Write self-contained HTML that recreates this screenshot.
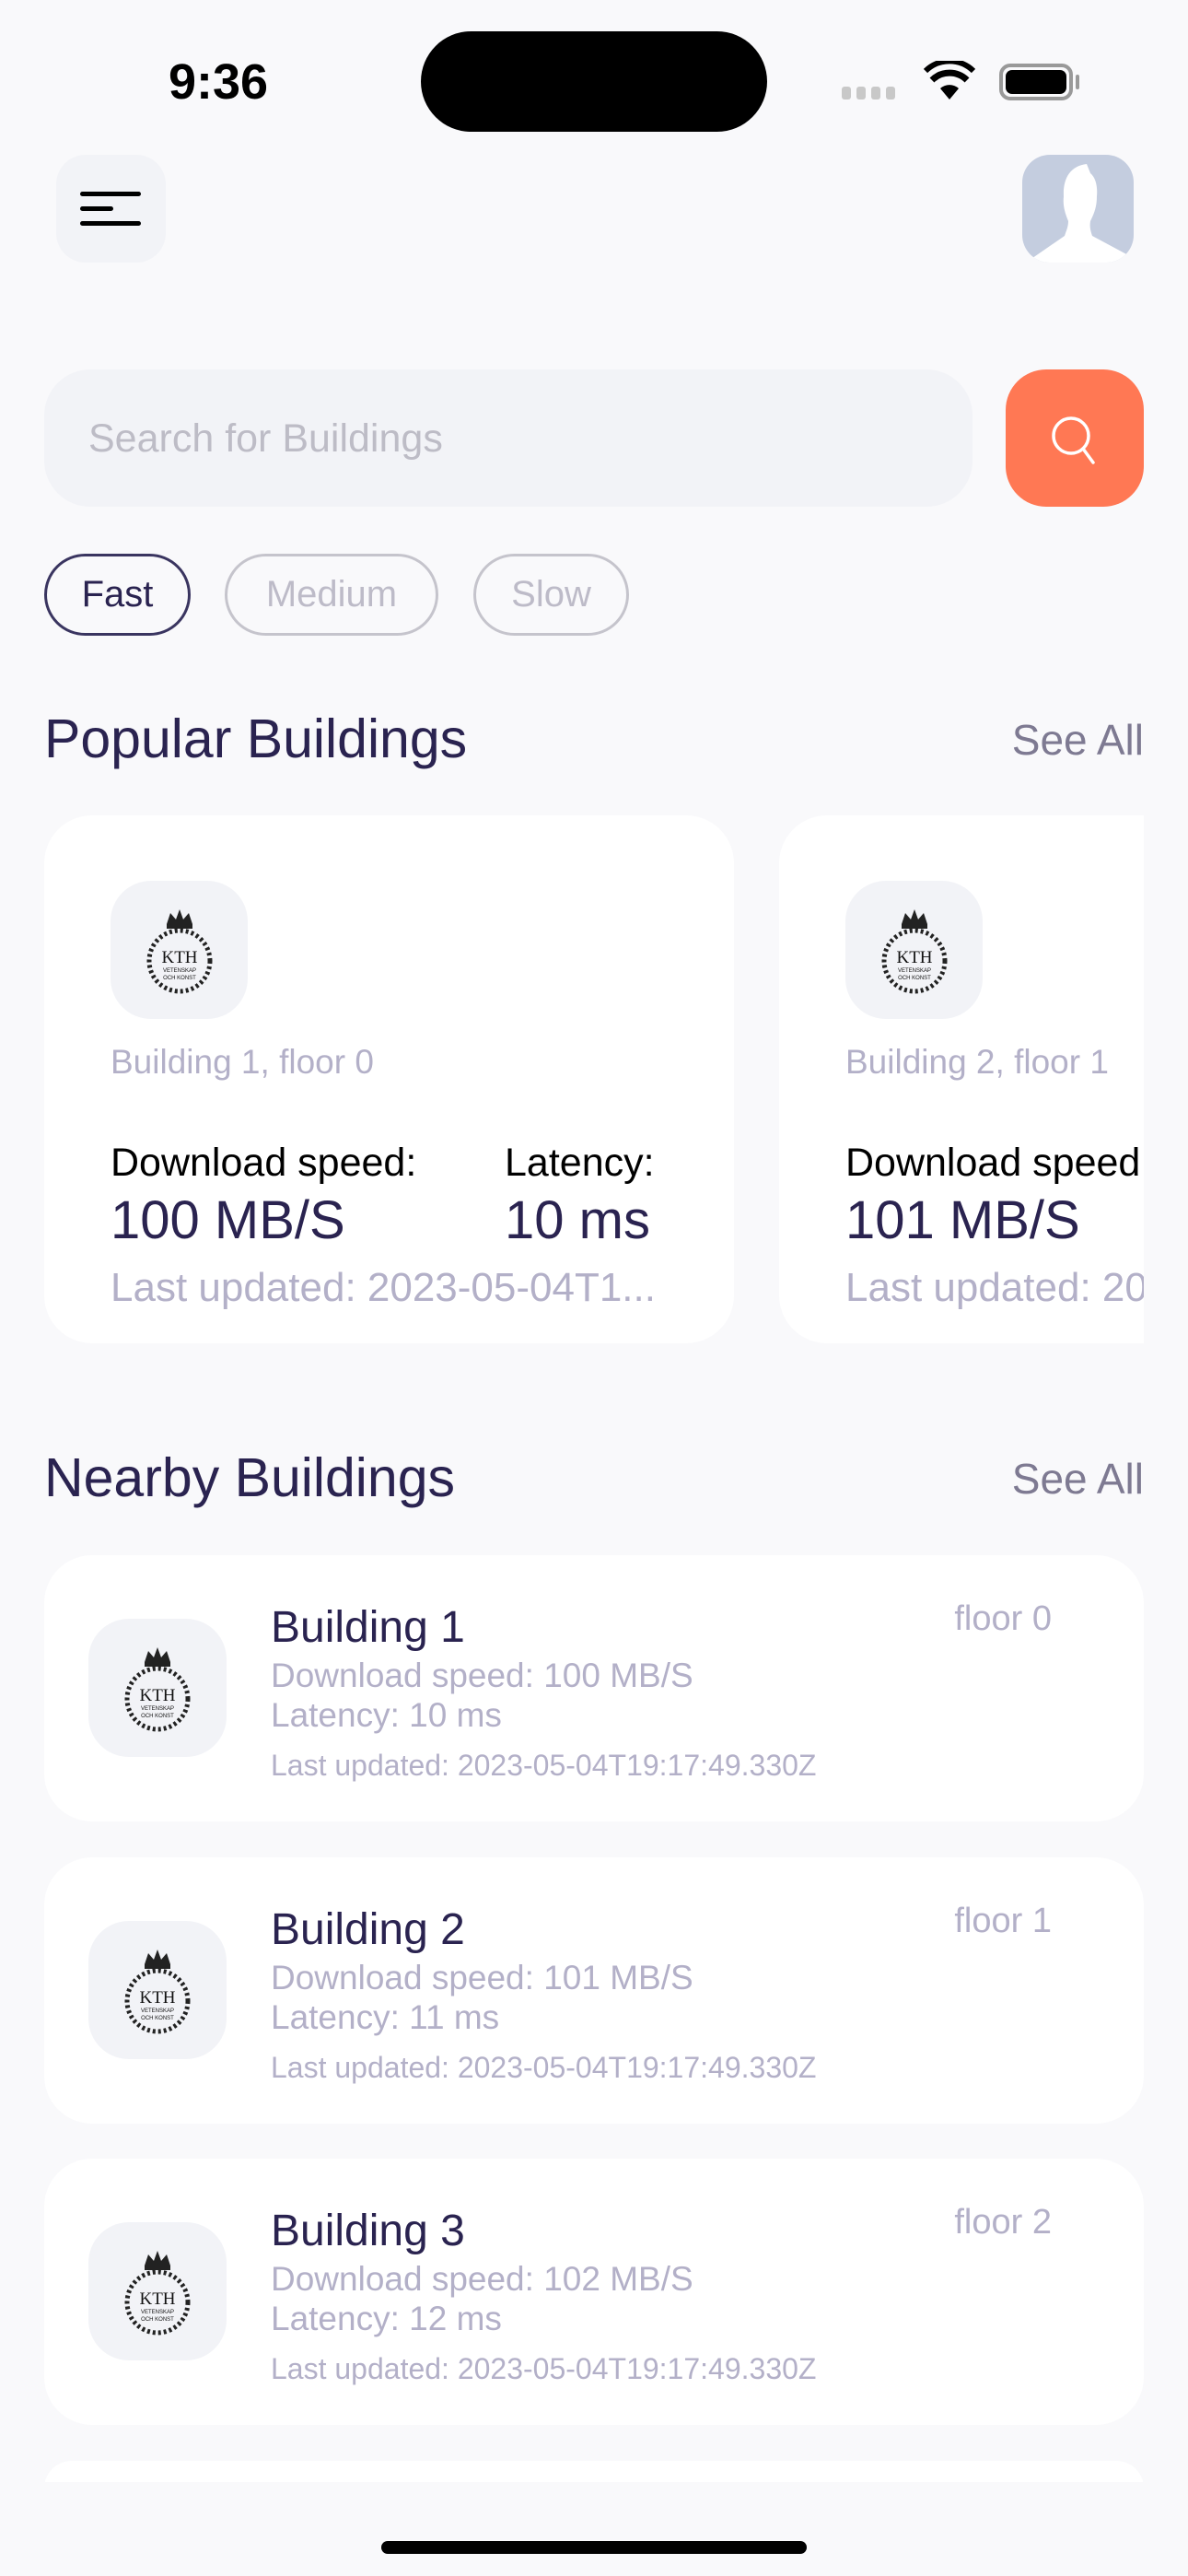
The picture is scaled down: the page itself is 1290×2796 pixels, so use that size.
<!DOCTYPE html>
<html style="overflow:hidden;height:2796px"><head><meta charset="utf-8"><style>
*{margin:0;padding:0;box-sizing:border-box}
body{width:1290px;height:2796px;background:#F9F9FB;font-family:"Liberation Sans",sans-serif;position:relative;overflow:hidden}
.a{position:absolute;white-space:nowrap}
.dark{color:#2A2350}
.gray{color:#B3B0C8}
.card{position:absolute;background:#fff;border-radius:52px}
.logo{position:absolute;background:#F2F3F7;border-radius:44px;display:flex;align-items:center;justify-content:center}
.chip{position:absolute;top:601px;height:89px;border-radius:45px;border:3px solid #C5C4CC;color:#BDBBC8;font-size:40px;display:flex;align-items:center;justify-content:center}
</style></head><body>
<svg width="0" height="0" style="position:absolute"><defs>
<g id="kth">
<circle cx="50" cy="62" r="33" fill="none" stroke="#222" stroke-width="5" stroke-dasharray="3 3"/>
<path d="M36 22 L40 10 L46 17 L50 6 L54 17 L60 10 L64 22 Z" fill="#222"/>
<rect x="36" y="22" width="28" height="5" fill="#222"/>
<text x="50" y="64" font-family="Liberation Serif,serif" font-size="19" text-anchor="middle" fill="#111">KTH</text>
<text x="50" y="74" font-family="Liberation Sans,sans-serif" font-size="6" text-anchor="middle" fill="#111">VETENSKAP</text>
<text x="50" y="82" font-family="Liberation Sans,sans-serif" font-size="6" text-anchor="middle" fill="#111">OCH KONST</text>
</g></defs></svg>

<div class="a" style="left:183px;top:58px;font-size:54px;font-weight:bold;color:#000">9:36</div>
<div class="a" style="left:457px;top:34px;width:376px;height:109px;background:#000;border-radius:55px"></div>
<div class="a" style="left:914px;top:94px;display:flex;gap:6px"><i style="width:10px;height:14px;background:#C8C8C8;border-radius:3px;display:block"></i><i style="width:10px;height:14px;background:#C8C8C8;border-radius:3px;display:block"></i><i style="width:10px;height:14px;background:#C8C8C8;border-radius:3px;display:block"></i><i style="width:10px;height:14px;background:#C8C8C8;border-radius:3px;display:block"></i></div>
<svg class="a" style="left:1003px;top:66px" width="56" height="42" viewBox="0 0 56 42"><path d="M28 42 L18 30 A15 15 0 0 1 38 30 Z" fill="#000"/><path d="M9 21 A27 27 0 0 1 47 21" fill="none" stroke="#000" stroke-width="7"/><path d="M2 11 A37 37 0 0 1 54 11" fill="none" stroke="#000" stroke-width="6"/></svg>
<div class="a" style="left:1085px;top:69px;width:80px;height:40px;border:4px solid #999;border-radius:12px;padding:3px"><div style="width:100%;height:100%;background:#000;border-radius:7px"></div></div>
<div class="a" style="left:1168px;top:81px;width:4px;height:16px;background:#999;border-radius:2px"></div>

<div class="a" style="left:61px;top:168px;width:119px;height:117px;background:#F2F3F7;border-radius:32px"></div>
<div class="a" style="left:87px;top:208px;width:66px;height:5px;background:#000;border-radius:3px"></div>
<div class="a" style="left:87px;top:224px;width:36px;height:5px;background:#000;border-radius:3px"></div>
<div class="a" style="left:87px;top:240px;width:66px;height:5px;background:#000;border-radius:3px"></div>

<div class="a" style="left:1110px;top:168px;width:121px;height:117px;background:#C4CDDF;border-radius:30px;overflow:hidden">
<svg width="121" height="117" viewBox="0 0 121 117"><path d="M70 10 C52 12 44 26 45 45 C44 55 46 62 50 72 C50 78 48 82 46 88 L4 117 L117 117 L117 110 L76 88 C74 82 73 78 74 72 C79 62 81 55 81 45 C82 35 80 25 74 20 Z" fill="#fff"/></svg></div>

<div class="a" style="left:48px;top:401px;width:1008px;height:149px;background:#F2F3F7;border-radius:50px"></div>
<div class="a" style="left:96px;top:452px;font-size:43px;color:#BDBCC6">Search for Buildings</div>
<div class="a" style="left:1092px;top:401px;width:150px;height:149px;background:#FF7854;border-radius:44px"></div>
<svg class="a" style="left:1132px;top:442px" width="70" height="70" viewBox="0 0 70 70"><circle cx="31" cy="31" r="19" fill="none" stroke="#fff" stroke-width="3.5"/><path d="M44 45 L55 60" stroke="#fff" stroke-width="3.5" stroke-linecap="round"/></svg>

<div class="chip" style="left:48px;width:159px;border-color:#3A3560;color:#2A2350">Fast</div>
<div class="chip" style="left:244px;width:232px">Medium</div>
<div class="chip" style="left:514px;width:169px">Slow</div>

<div class="a dark" style="left:48px;top:768px;font-size:59px">Popular Buildings</div>
<div class="a" style="right:48px;top:776px;font-size:46px;color:#7E7A92">See All</div>

<div class="a" style="left:48px;top:885px;width:1194px;height:573px;overflow:hidden">
<div class="card" style="left:0;top:0;width:749px;height:573px">
<div class="logo" style="left:72px;top:71px;width:149px;height:150px"><svg width="100" height="100" viewBox="0 0 100 100"><use href="#kth"/></svg></div>
<div class="a gray" style="left:72px;top:247px;font-size:37px">Building 1, floor 0</div>
<div class="a" style="left:72px;top:353px;font-size:43px;color:#000">Download speed:</div>
<div class="a" style="left:500px;top:353px;font-size:43px;color:#000">Latency:</div>
<div class="a dark" style="left:72px;top:406px;font-size:58px">100 MB/S</div>
<div class="a dark" style="left:500px;top:406px;font-size:58px">10 ms</div>
<div class="a gray" style="left:72px;top:488px;font-size:44px">Last updated: 2023-05-04T1...</div>
</div>
<div class="card" style="left:798px;top:0;width:749px;height:573px">
<div class="logo" style="left:72px;top:71px;width:149px;height:150px"><svg width="100" height="100" viewBox="0 0 100 100"><use href="#kth"/></svg></div>
<div class="a gray" style="left:72px;top:247px;font-size:37px">Building 2, floor 1</div>
<div class="a" style="left:72px;top:353px;font-size:43px;color:#000">Download speed:</div>
<div class="a dark" style="left:72px;top:406px;font-size:58px">101 MB/S</div>
<div class="a gray" style="left:72px;top:488px;font-size:44px">Last updated: 2023-05-04T1...</div>
</div>
</div>

<div class="a dark" style="left:48px;top:1570px;font-size:59px">Nearby Buildings</div>
<div class="a" style="right:48px;top:1578px;font-size:46px;color:#7E7A92">See All</div>

<div class="card" style="left:48px;top:1688px;width:1194px;height:289px">
<div class="logo" style="left:48px;top:69px;width:150px;height:150px"><svg width="100" height="100" viewBox="0 0 100 100"><use href="#kth"/></svg></div>
<div class="a dark" style="left:246px;top:51px;font-size:48px">Building 1</div>
<div class="a gray" style="right:100px;top:48px;font-size:38px">floor 0</div>
<div class="a gray" style="left:246px;top:110px;font-size:37px">Download speed: 100 MB/S</div>
<div class="a gray" style="left:246px;top:153px;font-size:37px">Latency: 10 ms</div>
<div class="a gray" style="left:246px;top:210px;font-size:32px">Last updated: 2023-05-04T19:17:49.330Z</div>
</div>
<div class="card" style="left:48px;top:2016px;width:1194px;height:289px">
<div class="logo" style="left:48px;top:69px;width:150px;height:150px"><svg width="100" height="100" viewBox="0 0 100 100"><use href="#kth"/></svg></div>
<div class="a dark" style="left:246px;top:51px;font-size:48px">Building 2</div>
<div class="a gray" style="right:100px;top:48px;font-size:38px">floor 1</div>
<div class="a gray" style="left:246px;top:110px;font-size:37px">Download speed: 101 MB/S</div>
<div class="a gray" style="left:246px;top:153px;font-size:37px">Latency: 11 ms</div>
<div class="a gray" style="left:246px;top:210px;font-size:32px">Last updated: 2023-05-04T19:17:49.330Z</div>
</div>
<div class="card" style="left:48px;top:2343px;width:1194px;height:289px">
<div class="logo" style="left:48px;top:69px;width:150px;height:150px"><svg width="100" height="100" viewBox="0 0 100 100"><use href="#kth"/></svg></div>
<div class="a dark" style="left:246px;top:51px;font-size:48px">Building 3</div>
<div class="a gray" style="right:100px;top:48px;font-size:38px">floor 2</div>
<div class="a gray" style="left:246px;top:110px;font-size:37px">Download speed: 102 MB/S</div>
<div class="a gray" style="left:246px;top:153px;font-size:37px">Latency: 12 ms</div>
<div class="a gray" style="left:246px;top:210px;font-size:32px">Last updated: 2023-05-04T19:17:49.330Z</div>
</div>
<div class="card" style="left:48px;top:2671px;width:1194px;height:60px"></div>
<div class="a" style="left:0;top:2694px;width:1290px;height:102px;background:#F9F9FB"></div>
<div class="a" style="left:414px;top:2758px;width:462px;height:14px;background:#000;border-radius:7px"></div>
</body></html>
